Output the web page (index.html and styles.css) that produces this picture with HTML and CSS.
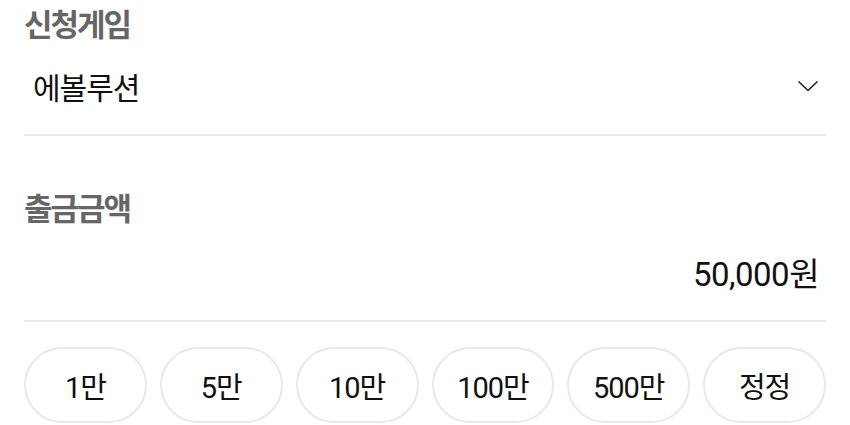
FILE: index.html
```html
<!DOCTYPE html>
<html lang="ko">
<head>
  <meta charset="UTF-8" />
  <meta name="viewport" content="width=device-width, initial-scale=1.0"/>
  <title>출금신청</title>
  <link rel="stylesheet" href="styles.css">
</head>
<body>
  <div class="form">
    <div class="label">신청게임</div>
    <div class="row select">
      <span class="value">에볼루션</span>
      <svg class="chevron" width="22" height="12" viewBox="0 0 22 12">
        <path d="M1.5 1.5 L11 10.5 L20.5 1.5" fill="none" stroke="#222" stroke-width="1.6"/>
      </svg>
    </div>

    <div class="label second">출금금액</div>
    <div class="row amount">
      <span class="value">50,000원</span>
    </div>

    <div class="buttons">
      <button>1만</button>
      <button>5만</button>
      <button>10만</button>
      <button>100만</button>
      <button>500만</button>
      <button>정정</button>
    </div>
  </div>
</body>
</html>
```

FILE: styles.css
```css
* { box-sizing: border-box; }
body { margin: 0; background: #fff; font-family: Roboto, "Noto Sans CJK KR", sans-serif; color: #111; }
.form { padding: 0 24px; }
.label { font-size: 31px; font-weight: bold; color: #666; letter-spacing: -2px; font-family: "Noto Sans CJK KR", sans-serif; }
.label.second { margin-top: 48px; }
.row { display: flex; align-items: center; border-bottom: 2px solid #e8e8e8; }
.select { height: 91px; justify-content: space-between; padding: 0 7px 7px 9px; }
.select .value { font-size: 30px; letter-spacing: -1px; font-family: "Noto Sans CJK KR", sans-serif; }
.chevron { display: block; }
.amount { height: 93px; justify-content: flex-end; padding: 0 7px 5px 0; }
.amount .value { font-size: 33px; letter-spacing: -0.5px; }
.buttons { display: grid; grid-template-columns: repeat(6, 1fr); gap: 13px; margin-top: 25px; }
.buttons button { height: 76px; border: 2px solid #e8e8e8; border-radius: 38px; background: #fff; font-family: Roboto, "Noto Sans CJK KR", sans-serif; font-size: 29px; color: #111; letter-spacing: -1px; padding: 0; }
```
